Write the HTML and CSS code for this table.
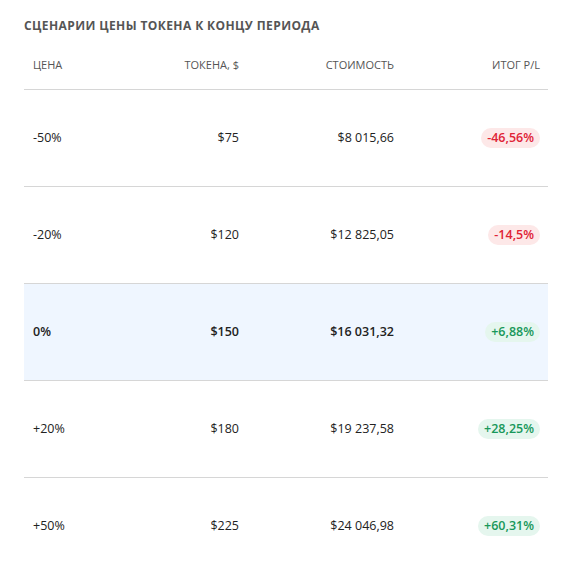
FILE: index.html
```html
<!DOCTYPE html>
<html lang="ru">
<head>
<meta charset="utf-8">
<link rel="stylesheet" href="styles.css">
</head>
<body>
<div class="panel">
  <h2 class="title">Сценарии цены токена к концу периода</h2>
  <table class="scen">
    <colgroup>
      <col class="c1"><col class="c2"><col class="c3"><col class="c4">
    </colgroup>
    <thead>
      <tr><th class="l">Цена</th><th>Токена, $</th><th>Стоимость</th><th>Итог P/L</th></tr>
    </thead>
    <tbody>
      <tr><td class="l">-50%</td><td>$75</td><td>$8 015,66</td><td><span class="pill neg">-46,56%</span></td></tr>
      <tr><td class="l">-20%</td><td>$120</td><td>$12 825,05</td><td><span class="pill neg">-14,5%</span></td></tr>
      <tr class="cur"><td class="l">0%</td><td>$150</td><td>$16 031,32</td><td><span class="pill pos">+6,88%</span></td></tr>
      <tr><td class="l">+20%</td><td>$180</td><td>$19 237,58</td><td><span class="pill pos">+28,25%</span></td></tr>
      <tr><td class="l">+50%</td><td>$225</td><td>$24 046,98</td><td><span class="pill pos">+60,31%</span></td></tr>
    </tbody>
  </table>
</div>
</body>
</html>
```
FILE: styles.css
```css
* { box-sizing: border-box; }
body {
  margin: 0;
  background: #ffffff;
  font-family: "Open Sans", "Noto Sans", sans-serif;
  color: #222222;
}
.panel {
  padding: 17px 24px 0 24px;
}
.title {
  margin: 0 0 6px 0;
  font-size: 12px;
  font-weight: 700;
  letter-spacing: 0.4px;
  text-transform: uppercase;
  color: #555555;
  line-height: 18px;
}
.scen {
  width: 524px;
  border-collapse: collapse;
  table-layout: fixed;
}
.c1 { width: 110px; }
.c2 { width: 113px; }
.c3 { width: 155px; }
.c4 { width: 146px; }
.scen th {
  font-size: 11px;
  font-weight: 400;
  text-transform: uppercase;
  color: #555555;
  text-align: right;
  padding: 0 8px;
  height: 48px;
  border-bottom: 1px solid #d6d6d6;
  vertical-align: middle;
}
.scen td {
  font-size: 12.5px;
  text-align: right;
  padding: 0 8px;
  height: 97px;
  border-bottom: 1px solid #d6d6d6;
  vertical-align: middle;
}
.scen .l { text-align: left; padding-left: 9px; }
.scen tr.cur td {
  background: #eff6ff;
  font-weight: 600;
}
.pill {
  display: inline-block;
  padding: 1px 6px;
  border-radius: 10px;
  font-size: 12.5px;
  font-weight: 600;
  line-height: 18px;
}
.neg { background: #fde8e8; color: #e02336; }
.pos { background: #e5f6ee; color: #18985a; }
```
